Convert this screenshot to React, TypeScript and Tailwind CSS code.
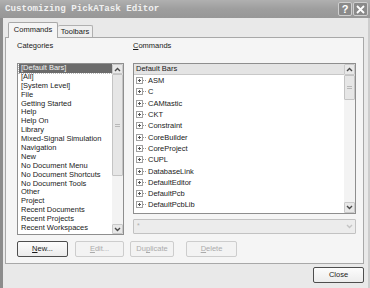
import React from "react";

const categories = [
  "[Default Bars]",
  "[All]",
  "[System Level]",
  "File",
  "Getting Started",
  "Help",
  "Help On",
  "Library",
  "Mixed-Signal Simulation",
  "Navigation",
  "New",
  "No Document Menu",
  "No Document Shortcuts",
  "No Document Tools",
  "Other",
  "Project",
  "Recent Documents",
  "Recent Projects",
  "Recent Workspaces",
];

const commands = [
  "ASM",
  "C",
  "CAMtastic",
  "CKT",
  "Constraint",
  "CoreBuilder",
  "CoreProject",
  "CUPL",
  "DatabaseLink",
  "DefaultEditor",
  "DefaultPcb",
  "DefaultPcbLib",
  "Disassembly",
];

function Arrow({ dir, faded }: { dir: "up" | "down"; faded?: boolean }) {
  return (
    <svg width="7" height="5" viewBox="0 0 7 5">
      <path
        d={dir === "up" ? "M1 4 L3.5 1.5 L6 4" : "M1 1 L3.5 3.5 L6 1"}
        fill="none"
        stroke={faded ? "#c4c4c4" : "#4a4a4a"}
        strokeWidth="1.4"
      />
    </svg>
  );
}

function ScrollBar({ thumb, arrowH }: { thumb: [number, number]; arrowH: number }) {
  return (
    <div className="w-[11px] h-full flex flex-col bg-[#f3f3f3]">
      <div
        className="flex items-center justify-center border border-[#c9c9c9] bg-[#e8e8e8] rounded-[1px]"
        style={{ height: arrowH }}
      >
        <Arrow dir="up" />
      </div>
      <div style={{ height: thumb[0] }} />
      <div
        className="border border-[#c4c4c4] bg-[#e6e6e6] rounded-[1px] flex items-center justify-center"
        style={{ height: thumb[1] }}
      >
        <div className="w-[5px] flex flex-col gap-[1px]">
          <div className="h-px bg-[#b8b8b8]" />
          <div className="h-px bg-[#b8b8b8]" />
        </div>
      </div>
      <div className="flex-1" />
      <div
        className="flex items-center justify-center border border-[#c9c9c9] bg-[#e8e8e8] rounded-[1px]"
        style={{ height: arrowH }}
      >
        <Arrow dir="down" />
      </div>
    </div>
  );
}

function PlusBox() {
  return (
    <div className="flex items-center">
      <div className="w-[7px] h-[7px] border border-[#a0a0a0] bg-white flex items-center justify-center relative">
        <div className="absolute w-[3px] h-px bg-[#555]" />
        <div className="absolute w-px h-[3px] bg-[#555]" />
      </div>
      <div className="w-[3px] border-t border-dotted border-[#999]" />
    </div>
  );
}

export default function App() {
  const btn = "h-[16px] flex items-center justify-center rounded-[2px] text-[7.5px]";
  return (
    <div
      className="w-[370px] h-[288px] flex flex-col overflow-hidden bg-[#e9e9e9] text-[#1a1a1a]"
      style={{ fontFamily: '"Liberation Sans", Arial, sans-serif' }}
    >
      {/* Title bar */}
      <div className="h-[18px] flex items-center bg-gradient-to-b from-[#b0b0b0] via-[#9e9e9e] to-[#979797] pl-[5px] pr-[2px]">
        <span
          className="text-[9.2px] font-bold text-[#f0f0f0]"
          style={{ fontFamily: '"Liberation Mono", "Courier New", monospace' }}
        >
          Customizing PickATask Editor
        </span>
        <div className="flex-1" />
        <div className="flex gap-[1px]">
          <div className="w-[14px] h-[14px] rounded-[2px] border border-[#cfcfcf] bg-[#8a8a8a] flex items-center justify-center text-white text-[11px] font-bold leading-none">
            ?
          </div>
          <div className="w-[15px] h-[14px] rounded-[2px] border border-[#cfcfcf] bg-[#8a8a8a] flex items-center justify-center">
            <svg width="9" height="9" viewBox="0 0 9 9">
              <path d="M1 1 L8 8 M8 1 L1 8" stroke="#fff" strokeWidth="1.8" />
            </svg>
          </div>
        </div>
      </div>

      {/* Body */}
      <div className="flex-1 flex flex-col border-l-[3px] border-[#8c8c8c] border-r-[2px] border-r-[#cdcdcd] bg-[#e9e9e9]">
        {/* Tabs */}
        <div className="h-[19px] flex items-end pl-[5px] relative z-10">
          <div className="w-[50px] h-[16px] bg-[#f5f5f5] border border-[#a8a8a8] border-b-0 rounded-t-[2px] flex items-center justify-center text-[7.5px] mb-[-1px] pb-[1px]">
            Commands
          </div>
          <div className="w-[35px] h-[12px] bg-[#efefef] border border-[#b0b0b0] border-b-0 border-l-0 rounded-t-[2px] flex items-center justify-center text-[7.5px]">
            Toolbars
          </div>
        </div>

        {/* Panel */}
        <div className="ml-[2px] w-[359px] h-[227px] bg-[#f5f5f5] border border-[#a8a8a8] pl-[11px] flex flex-col">
          <div className="flex gap-[9px]">
            {/* Categories column */}
            <div className="w-[107px] flex flex-col">
              <div className="h-[25px] pt-[3px] text-[7.5px] leading-[9px]">Categories</div>
              <div className="h-[172px] border border-[#8e8e8e] bg-white flex">
                <div className="flex-1 pl-[1px] overflow-hidden">
                  {categories.map((c, i) => (
                    <div
                      key={c}
                      className={`h-[8.9px] text-[7.5px] leading-[8.9px] pl-[2px] whitespace-nowrap ${
                        i === 0 ? "bg-[#6b6b6b] text-[#f2f2f2] w-[94px] outline outline-1 outline-dotted outline-[#bbb]" : ""
                      }`}
                    >
                      {c}
                    </div>
                  ))}
                </div>
                <ScrollBar arrowH={10} thumb={[0, 102]} />
              </div>
            </div>

            {/* Commands column */}
            <div className="w-[223px] flex flex-col">
              <div className="h-[25px] pt-[3px] text-[7.5px] leading-[9px]">
                <span className="underline">C</span>ommands
              </div>
              <div className="h-[151px] border border-[#8e8e8e] bg-white flex">
                <div className="flex-1 flex flex-col overflow-hidden">
                  <div className="h-[11px] shrink-0 bg-[#e4e4e4] border-b border-[#c8c8c8] text-[7.5px] leading-[10px] pl-[2px]">
                    Default Bars
                  </div>
                  {commands.map((c) => (
                    <div key={c} className="h-[11.3px] shrink-0 flex items-center pl-[2px] gap-[2px]">
                      <PlusBox />
                      <span className="text-[7.5px] leading-[9px] whitespace-nowrap">{c}</span>
                    </div>
                  ))}
                </div>
                <ScrollBar arrowH={11} thumb={[0, 25]} />
              </div>
              <div className="mt-[5px] h-[15px] border border-[#c2c2c2] bg-[#ececec] flex items-center rounded-[1px]">
                <span className="flex-1 pl-[3px] text-[7px] text-[#b0b0b0]">*</span>
                <div className="w-[11px] h-[13px] flex items-center justify-center">
                  <Arrow dir="down" faded />
                </div>
              </div>
            </div>
          </div>

          {/* Buttons */}
          <div className="mt-[6px] flex">
            <div className={`${btn} w-[51px] border border-[#4e4e4e] bg-gradient-to-b from-[#fcfcfc] to-[#ececec]`}>
              <span className="underline">N</span>ew...
            </div>
            <div className={`${btn} ml-[7px] w-[49px] border border-[#cdcdcd] text-[#ababab] bg-[#f3f3f3]`}>
              <span className="underline">E</span>dit...
            </div>
            <div className={`${btn} ml-[6px] w-[44px] border border-[#cdcdcd] text-[#ababab] bg-[#f3f3f3]`}>
              Du<span className="underline">p</span>licate
            </div>
            <div className={`${btn} ml-[12px] w-[51px] border border-[#cdcdcd] text-[#ababab] bg-[#f3f3f3]`}>
              <span className="underline">D</span>elete
            </div>
          </div>
        </div>

        {/* Footer */}
        <div className="flex justify-end pt-[3px] pr-[4px]">
          <div className={`${btn} w-[51px] border border-[#4e4e4e] bg-gradient-to-b from-[#fcfcfc] to-[#ececec]`}>
            Close
          </div>
        </div>
      </div>
    </div>
  );
}
